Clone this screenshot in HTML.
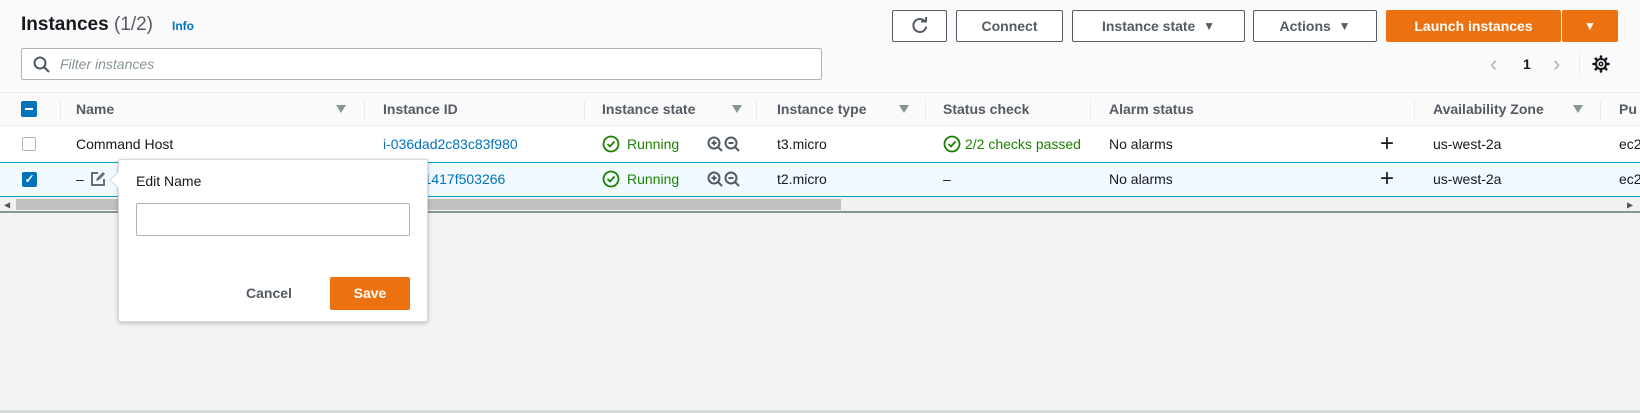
<!DOCTYPE html>
<html><head><style>
*{box-sizing:border-box;margin:0;padding:0}
body{width:1640px;height:413px;overflow:hidden;background:#f2f3f3;font-family:"Liberation Sans",sans-serif;font-size:14px;color:#16191f;position:relative}
.abs{position:absolute}
.top{left:0;top:0;width:1640px;height:92px;background:#fafafa}
.btn{position:absolute;top:10px;height:32px;border:1px solid #545b64;border-radius:2px;background:#fff;font-weight:bold;color:#545b64;display:flex;align-items:center;justify-content:center;font-size:14px}
.or{background:#ec7211;border-color:#ec7211;color:#fff}
.hdr{left:0;top:92px;width:1640px;height:34px;background:#fafafa;border-top:1px solid #eaeded;border-bottom:1px solid #eaeded}
.row{left:0;width:1640px;background:#fff}
.t{position:absolute;transform:translateY(-50%);white-space:nowrap}
.h{font-weight:bold;color:#545b64}
.dv{position:absolute;width:1px;height:20px;background:#eaeded;top:100px}
.tri{position:absolute;width:0;height:0;border-left:5px solid transparent;border-right:5px solid transparent;border-top:8px solid #879596}
.link{color:#0073bb}
.g{color:#1d8102}
</style></head><body>
<div class="abs top"></div>
<div class="t" style="left:21px;top:25px;font-size:19px"><b>Instances</b> <span style="color:#545b64">(1/2)</span></div>
<div class="t link" style="left:172px;top:26px;font-size:12px;font-weight:bold">Info</div>
<div class="btn" style="left:892px;width:55px"><svg width="18" height="18" viewBox="0 0 18 18"><path d="M14 4.5A6.5 6.5 0 1 0 15.3 9.5" fill="none" stroke="#545b64" stroke-width="2"/><path d="M10 3.5h5v-5" transform="translate(0,1)" fill="none" stroke="#545b64" stroke-width="2"/></svg></div>
<div class="btn" style="left:956px;width:107px">Connect</div>
<div class="btn" style="left:1072px;width:173px">Instance state&nbsp;&nbsp;<span style="font-size:12px">▼</span></div>
<div class="btn" style="left:1253px;width:124px">Actions&nbsp;&nbsp;<span style="font-size:12px">▼</span></div>
<div class="btn or" style="left:1386px;width:175px">Launch instances</div>
<div class="btn or" style="left:1562px;width:56px;font-size:12px">▼</div>
<div class="abs" style="left:21px;top:48px;width:801px;height:32px;background:#fff;border:1px solid #aab7b8;border-radius:2px"></div>
<svg class="abs" style="left:33px;top:56px" width="17" height="17" viewBox="0 0 17 17"><circle cx="7" cy="7" r="5.5" fill="none" stroke="#545b64" stroke-width="2"/><path d="M11 11l5 5" stroke="#545b64" stroke-width="2.2"/></svg>
<div class="t" style="left:60px;top:64px;font-style:italic;color:#879596">Filter instances</div>
<div class="t" style="left:1490px;top:64px;font-size:22px;color:#aab7b8">‹</div>
<div class="t" style="left:1523px;top:64px;font-weight:bold">1</div>
<div class="t" style="left:1553px;top:64px;font-size:22px;color:#aab7b8">›</div>
<div class="abs" style="left:1579px;top:50px;width:1px;height:28px;background:#eaeded"></div>
<svg class="abs" style="left:1592px;top:55px" width="18" height="18" viewBox="0 0 18 18"><g stroke="#16191f" stroke-width="2.6" stroke-linecap="round"><path d="M9 1.5v2M9 14.5v2M1.5 9h2M14.5 9h2M3.7 3.7l1.4 1.4M12.9 12.9l1.4 1.4M3.7 14.3l1.4-1.4M12.9 5.1l1.4-1.4"/></g><circle cx="9" cy="9" r="5" fill="none" stroke="#16191f" stroke-width="2"/><circle cx="9" cy="9" r="1.8" fill="none" stroke="#16191f" stroke-width="1.5"/></svg>

<div class="abs hdr"></div>
<div class="abs" style="left:21px;top:101px;width:16px;height:16px;background:#0073bb;border-radius:2px"><div style="position:absolute;left:4px;top:7px;width:8px;height:2px;background:#fff"></div></div>
<div class="dv" style="left:60px"></div>
<div class="t h" style="left:76px;top:109px">Name</div><div class="tri" style="left:336px;top:105px"></div>
<div class="dv" style="left:364px"></div>
<div class="t h" style="left:383px;top:109px">Instance ID</div>
<div class="dv" style="left:584px"></div>
<div class="t h" style="left:602px;top:109px">Instance state</div><div class="tri" style="left:732px;top:105px"></div>
<div class="dv" style="left:756px"></div>
<div class="t h" style="left:777px;top:109px">Instance type</div><div class="tri" style="left:899px;top:105px"></div>
<div class="dv" style="left:925px"></div>
<div class="t h" style="left:943px;top:109px">Status check</div>
<div class="dv" style="left:1090px"></div>
<div class="t h" style="left:1109px;top:109px">Alarm status</div>
<div class="dv" style="left:1414px"></div>
<div class="t h" style="left:1433px;top:109px">Availability Zone</div><div class="tri" style="left:1573px;top:105px"></div>
<div class="dv" style="left:1600px"></div>
<div class="t h" style="left:1619px;top:109px">Pu</div>

<div class="abs row" style="top:126px;height:36px"></div>
<div class="abs" style="left:22px;top:137px;width:14px;height:14px;border:1px solid #aab7b8;border-radius:2px;background:#fff"></div>
<div class="t" style="left:76px;top:144px">Command Host</div>
<div class="t link" style="left:383px;top:144px">i-036dad2c83c83f980</div>
<svg class="abs" style="left:602px;top:135px" width="18" height="18"><circle cx="9" cy="9" r="7.5" fill="none" stroke="#1d8102" stroke-width="1.8"/><path d="M5.5 9l2.5 2.5 4.5-5" fill="none" stroke="#1d8102" stroke-width="1.8"/></svg>
<div class="t g" style="left:627px;top:144px">Running</div>
<svg class="abs" style="left:707px;top:136px" width="36" height="17" viewBox="0 0 36 17"><g fill="none" stroke="#545b64" stroke-width="2"><circle cx="7" cy="7" r="5.5"/><path d="M11 11l4 4M4.5 7h5M7 4.5v5"/><circle cx="24" cy="7" r="5.5"/><path d="M28 11l4 4M21.5 7h5"/></g></svg>
<div class="t" style="left:777px;top:144px">t3.micro</div>
<svg class="abs" style="left:943px;top:135px" width="18" height="18"><circle cx="9" cy="9" r="7.5" fill="none" stroke="#1d8102" stroke-width="1.8"/><path d="M5.5 9l2.5 2.5 4.5-5" fill="none" stroke="#1d8102" stroke-width="1.8"/></svg>
<div class="t g" style="left:965px;top:144px">2/2 checks passed</div>
<div class="t" style="left:1109px;top:144px">No alarms</div>
<div class="t" style="left:1380px;top:144px;font-size:24px">+</div>
<div class="t" style="left:1433px;top:144px">us-west-2a</div>
<div class="t" style="left:1619px;top:144px">ec2</div>

<div class="abs row" style="top:162px;height:35px;background:#f1faff;border-top:1px solid #00a1c9;border-bottom:1px solid #00a1c9"></div>
<div class="abs" style="left:22px;top:172px;width:15px;height:15px;background:#0073bb;border-radius:2px;color:#fff;font-size:12px;font-weight:bold;text-align:center;line-height:15px">✓</div>
<div class="t" style="left:76px;top:179px">–</div>
<svg class="abs" style="left:90px;top:171px" width="16" height="16"><path d="M8 2H2v12h12V8" fill="none" stroke="#687078" stroke-width="2"/><path d="M6 10l1-3 6-6 2 2-6 6z" fill="#687078"/></svg>
<div class="t link" style="left:408px;top:179px">951417f503266</div>
<svg class="abs" style="left:602px;top:170px" width="18" height="18"><circle cx="9" cy="9" r="7.5" fill="none" stroke="#1d8102" stroke-width="1.8"/><path d="M5.5 9l2.5 2.5 4.5-5" fill="none" stroke="#1d8102" stroke-width="1.8"/></svg>
<div class="t g" style="left:627px;top:179px">Running</div>
<svg class="abs" style="left:707px;top:171px" width="36" height="17" viewBox="0 0 36 17"><g fill="none" stroke="#545b64" stroke-width="2"><circle cx="7" cy="7" r="5.5"/><path d="M11 11l4 4M4.5 7h5M7 4.5v5"/><circle cx="24" cy="7" r="5.5"/><path d="M28 11l4 4M21.5 7h5"/></g></svg>
<div class="t" style="left:777px;top:179px">t2.micro</div>
<div class="t" style="left:943px;top:179px">–</div>
<div class="t" style="left:1109px;top:179px">No alarms</div>
<div class="t" style="left:1380px;top:179px;font-size:24px">+</div>
<div class="t" style="left:1433px;top:179px">us-west-2a</div>
<div class="t" style="left:1619px;top:179px">ec2</div>

<div class="abs" style="left:0;top:197px;width:1640px;height:16px;background:#f1f1f1;border-bottom:2px solid #879596"></div>
<div class="abs" style="left:16px;top:199px;width:825px;height:11px;background:#c1c1c1"></div>
<div class="t" style="left:4px;top:205px;font-size:8px;color:#555">◀</div>
<div class="t" style="left:1627px;top:205px;font-size:8px;color:#555">▶</div>
<div class="abs" style="left:0;top:410px;width:1640px;height:3px;background:#d5dbdb"></div>

<div class="abs" style="left:118px;top:159px;width:310px;height:163px;background:#fff;border:1px solid #d5dbdb;border-radius:2px;box-shadow:0 1px 4px rgba(0,0,0,.25)"></div>
<div class="abs" style="left:112px;top:174px;width:12px;height:12px;background:#fff;transform:rotate(45deg);border-left:1px solid #d5dbdb;border-bottom:1px solid #d5dbdb"></div>
<div class="t" style="left:136px;top:181px">Edit Name</div>
<div class="abs" style="left:136px;top:203px;width:274px;height:33px;border:1px solid #aab7b8;border-radius:2px;background:#fff"></div>
<div class="t" style="left:246px;top:293px;font-weight:bold;color:#545b64">Cancel</div>
<div class="abs" style="left:330px;top:277px;width:80px;height:33px;background:#ec7211;border-radius:2px;color:#fff;font-weight:bold;text-align:center;line-height:33px">Save</div>
</body></html>
